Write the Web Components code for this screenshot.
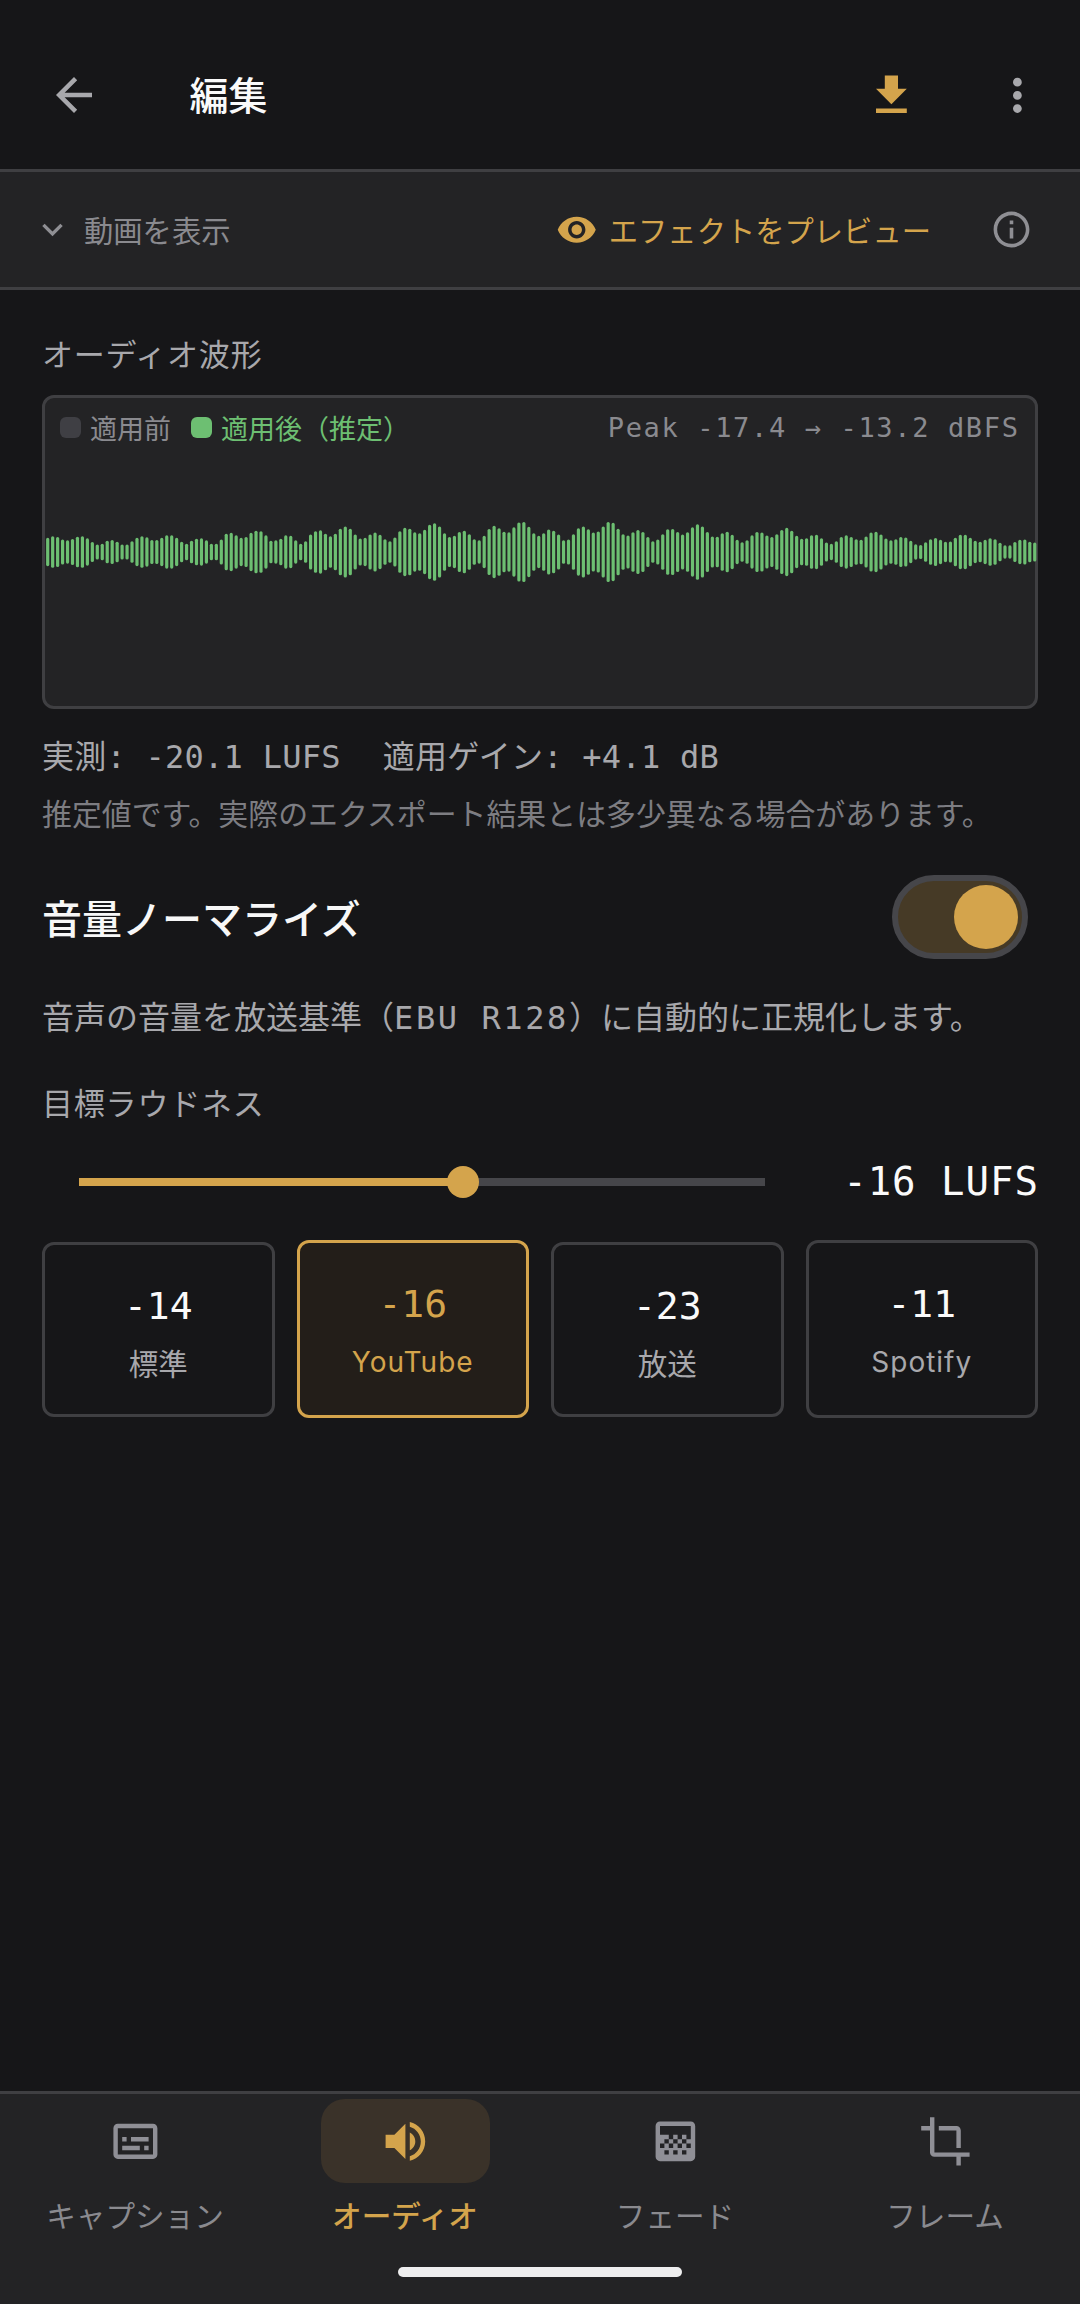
<!DOCTYPE html>
<html lang="ja">
<head>
<meta charset="utf-8">
<title>編集</title>
<style>
html,body{margin:0;padding:0;background:#161618;}
body{font-family:"Inter","Noto Sans CJK JP",sans-serif;color:#a8a8ac;}
</style>
</head>
<body>
<edit-screen>
  <app-bar slot="top">編集</app-bar>
  <preview-bar slot="top"></preview-bar>

  <section-label>オーディオ波形</section-label>
  <wave-panel></wave-panel>
  <stat-line><span>実測: -20.1 LUFS</span><span>適用ゲイン: +4.1 dB</span></stat-line>
  <note-line>推定値です。実際のエクスポート結果とは多少異なる場合があります。</note-line>
  <toggle-row>音量ノーマライズ</toggle-row>
  <desc-line>音声の音量を放送基準&#xFF08;<span>EBU R128</span>&#xFF09;に自動的に正規化します。</desc-line>
  <section-label class="target">目標ラウドネス</section-label>
  <loud-slider value="56">-16 LUFS</loud-slider>
  <preset-row>
    <preset-card num="-14">標準</preset-card>
    <preset-card num="-16" active tall>YouTube</preset-card>
    <preset-card num="-23">放送</preset-card>
    <preset-card num="-11" tall>Spotify</preset-card>
  </preset-row>

  <bottom-nav slot="bottom">
    <nav-item icon="subtitles">キャプション</nav-item>
    <nav-item icon="volume" active>オーディオ</nav-item>
    <nav-item icon="gradient">フェード</nav-item>
    <nav-item icon="crop">フレーム</nav-item>
  </bottom-nav>
</edit-screen>

<script>
const GOLD = '#d4a44c';
const ICONS = {
  back:'M20 11H7.83l5.59-5.59L12 4l-8 8 8 8 1.41-1.41L7.83 13H20v-2z',
  download:'M19 9h-4V3H9v6H5l7 7 7-7zM5 18v2h14v-2H5z',
  more:'M12 8c1.1 0 2-.9 2-2s-.9-2-2-2-2 .9-2 2 .9 2 2 2zm0 2c-1.1 0-2 .9-2 2s.9 2 2 2 2-.9 2-2-.9-2-2-2zm0 6c-1.1 0-2 .9-2 2s.9 2 2 2 2-.9 2-2-.9-2-2-2z',
  chevron:'M16.59 8.59L12 13.17 7.41 8.59 6 10l6 6 6-6z',
  eye:'M12 4.5C7 4.5 2.73 7.61 1 12c1.73 4.39 6 7.5 11 7.5s9.27-3.11 11-7.5c-1.73-4.39-6-7.5-11-7.5zM12 17c-2.76 0-5-2.24-5-5s2.24-5 5-5 5 2.24 5 5-2.24 5-5 5zm0-8c-1.66 0-3 1.34-3 3s1.34 3 3 3 3-1.34 3-3-1.34-3-3-3z',
  info:'M11 7h2v2h-2zm0 4h2v6h-2zm1-9C6.48 2 2 6.48 2 12s4.48 10 10 10 10-4.48 10-10S17.52 2 12 2zm0 18c-4.41 0-8-3.59-8-8s3.59-8 8-8 8 3.59 8 8-3.59 8-8 8z',
  subtitles:'M20 4H4c-1.1 0-2 .9-2 2v12c0 1.1.9 2 2 2h16c1.1 0 2-.9 2-2V6c0-1.1-.9-2-2-2zm0 14H4V6h16v12zM6 10h2v2H6zm0 4h8v2H6zm10 0h2v2h-2zm-6-4h8v2h-8z',
  volume:'M3 9v6h4l5 5V4L7 9H3zm13.5 3c0-1.77-1.02-3.29-2.5-4.03v8.05c1.48-.73 2.5-2.25 2.5-4.02zM14 3.23v2.06c2.89.86 5 3.54 5 6.71s-2.11 5.85-5 6.71v2.06c4.01-.91 7-4.49 7-8.77s-2.99-7.86-7-8.77z',
  gradient:'M11 9h2v2h-2zm-2 2h2v2H9zm4 0h2v2h-2zm2-2h2v2h-2zM7 9h2v2H7zm12-6H5c-1.1 0-2 .9-2 2v14c0 1.1.9 2 2 2h14c1.1 0 2-.9 2-2V5c0-1.1-.9-2-2-2zM9 18H7v-2h2v2zm4 0h-2v-2h2v2zm4 0h-2v-2h2v2zm2-7h-2v2h2v2h-2v-2h-2v2h-2v-2h-2v2H9v-2H7v2H5v-2h2V9H5V5h14v6z',
  crop:'M17 15h2V7c0-1.1-.9-2-2-2H9v2h8v8zM7 17V1H5v4H1v2h4v10c0 1.1.9 2 2 2h10v4h2v-4h4v-2H7z'
};
function shadow(el, html){ el.attachShadow({mode:'open'}).innerHTML = html; }
function def(name, html, extra){
  customElements.define(name, class extends HTMLElement{
    constructor(){ super(); shadow(this, typeof html==='function' ? html(this) : html); }
    connectedCallback(){ if(extra) extra(this); }
  });
}

customElements.define('ui-icon', class extends HTMLElement{
  connectedCallback(){
    if(this.shadowRoot) return;
    const s = this.getAttribute('size')||52.8, c = this.getAttribute('color')||'currentColor';
    shadow(this, `<style>:host{display:block;flex:none;width:${s}px;height:${s}px}svg{display:block;width:100%;height:100%}</style>
    <svg viewBox="0 0 24 24"><path fill="${c}" d="${ICONS[this.getAttribute('name')]}"/></svg>`);
  }
});

def('edit-screen', `<style>
:host{display:flex;flex-direction:column;height:2304px;width:1080px;background:#161618;overflow:hidden}
main{flex:1;display:flex;flex-direction:column;padding:0 42px;min-height:0}
</style><slot name="top"></slot><main><slot></slot></main><slot name="bottom"></slot>`);

def('app-bar', `<style>
:host{display:flex;align-items:center;height:169px;box-sizing:border-box;padding:21px 36.5px 0 47px;font:500 39px/54px "Noto Sans CJK JP",sans-serif;color:#fafafa}
.t{flex:1;margin-left:88.5px;position:relative;top:-2px}
.d{margin-right:73px}
</style>
<ui-icon name="back" size="54" color="#a8a8ac"></ui-icon>
<div class="t"><slot></slot></div>
<ui-icon class="d" name="download" color="${GOLD}"></ui-icon>
<ui-icon name="more" color="#a8a8ac"></ui-icon>`);

def('preview-bar', `<style>
:host{display:flex;align-items:center;height:121px;box-sizing:border-box;background:#232325;border-top:3px solid #3f3f42;border-bottom:3px solid #3f3f42;padding:0 47px 0 32px;font:400 29.3px/44px "Noto Sans CJK JP",sans-serif}
.s{color:#8a8a8f;margin-left:11px;position:relative;top:-1px}
.sp{flex:1}
.e{color:${GOLD};margin-left:11px;position:relative;top:-1px}
.i{margin-left:59px}
</style>
<ui-icon name="chevron" size="41" color="#8f8f94"></ui-icon>
<span class="s">動画を表示</span>
<span class="sp"></span>
<ui-icon name="eye" size="41.5" color="${GOLD}"></ui-icon>
<span class="e">エフェクトをプレビュー</span>
<ui-icon class="i" name="info" size="43" color="#8f8f94"></ui-icon>`);

def('section-label', `<style>
:host{display:block;font:400 31px/44px "Noto Sans CJK JP",sans-serif;letter-spacing:.8px;color:#a8a8ac;margin-top:41px}
:host(.target){margin-top:43px}
</style><slot></slot>`);

const H = [85,95,90,75,70,78,92,95,82,60,45,50,68,72,62,45,45,65,85,95,88,72,72,85,100,100,85,62,50,68,80,82,70,50,50,75,110,115,100,85,90,115,128,125,100,68,70,80,100,97,70,50,65,105,125,130,110,95,110,140,
153,140,105,81,85,105,117,103,77,65,87,125,145,140,118,113,133,163,173,153,113,90,97,120,128,107,77,70,97,138,157,143,122,118,148,177,180,151,113,97,113,
135,128,105,71,75,107,142,153,137,117,123,153,180,175,140,107,99,119,132,120,90,65,75,107,137,138,120,105,119,148,167,153,120,93,92,113,122,103,73,59,71,100,120,117,99,90,107,132,145,128,
97,80,83,101,103,83,57,49,65,90,100,90,77,74,93,117,121,105,81,71,77,90,87,67,46,42,59,77,84,73,61,63,86,103,103,86,67,62,73,83,77,56,40,40,60,73,75,62,57];
def('wave-panel', () => {
  const P = 992/H.length;
  const rects = H.map((h,i)=>`<rect x="${(1.1+i*P).toFixed(2)}" y="${(94-h/6).toFixed(2)}" width="3.2" height="${(h/3).toFixed(2)}" rx="1.6"/>`).join('');
  return `<style>
:host{display:block;height:314px;box-sizing:border-box;margin-top:20px;background:#232325;border:3px solid #3f3f42;border-radius:12px;padding-bottom:60px}
.l{display:flex;align-items:center;height:60px;box-sizing:border-box;padding:0 17px 0 15px;font:400 27px/40px "Noto Sans CJK JP",sans-serif;color:#8a8a8f}
.sw{width:21px;height:21px;border-radius:6px;background:#3f3f44;margin-right:9px;margin-top:-1px}
.g{background:#6dbf72;margin-left:20px}
.gt{color:#6dbf72}
.p{margin-left:auto;font:400 27px/40px "DejaVu Sans Mono",monospace;letter-spacing:1.65px;margin-right:-1.6px}
svg{display:block;width:992px;height:188px;fill:#6dbf72}
</style>
<div class="l"><span class="sw"></span><span>適用前</span><span class="sw g"></span><span class="gt">適用後&#xFF08;推定&#xFF09;</span><span class="p">Peak -17.4 → -13.2 dBFS</span></div>
<svg viewBox="0 0 992 188">${rects}</svg>`;
});

def('stat-line', `<style>
:host{display:flex;gap:42px;margin-top:26px;font:400 32px/44px "DejaVu Sans Mono","Noto Sans CJK JP",monospace;letter-spacing:.25px;color:#a8a8ac;white-space:pre}
</style><slot></slot>`);

def('note-line', `<style>
:host{display:block;margin-top:11px;font:400 29.9px/44px "Noto Sans CJK JP",sans-serif;color:#7d7d82;white-space:nowrap}
</style><slot></slot>`);

def('toggle-row', `<style>
:host{display:flex;align-items:center;justify-content:space-between;height:84px;margin-top:41px;font:500 40px/54px "Noto Sans CJK JP",sans-serif;color:#f7f7f7}
.sw{box-sizing:border-box;width:136px;height:84px;border:6px solid #46464a;border-radius:42px;background:#463a26;margin-right:10.5px;display:flex;align-items:center;justify-content:flex-end;padding-right:4px}
.th{width:64px;height:64px;border-radius:50%;background:${GOLD}}
</style><span><slot></slot></span><div class="sw"><div class="th"></div></div>`);

def('desc-line', `<style>
:host{display:block;height:44px;margin-top:34px;font:400 32px/44px "Noto Sans CJK JP",sans-serif;color:#a8a8ac;white-space:nowrap}
::slotted(span){font-family:"DejaVu Sans Mono",monospace;letter-spacing:2.6px}
</style><slot></slot>`);

def('loud-slider', el => `<style>
:host{display:flex;align-items:center;height:44px;margin-top:36px;padding-left:37px}
.tr{position:relative;flex:1;height:8px;background:#46464a;margin-right:78px}
.f{height:100%;background:${GOLD};width:${el.getAttribute('value')}%}
.th{position:absolute;top:50%;left:${el.getAttribute('value')}%;width:32px;height:32px;margin:-16px 0 0 -16px;border-radius:50%;background:${GOLD}}
.v{font:500 39px/44px "DejaVu Sans Mono",monospace;letter-spacing:1px;margin-right:-1px;color:#fafafa;white-space:nowrap}
</style><div class="tr"><div class="f"></div><div class="th"></div></div><div class="v"><slot></slot></div>`);

def('preset-row', `<style>
:host{display:flex;align-items:center;gap:22px;margin-top:36px;height:178px}
::slotted(*){flex:1}
</style><slot></slot>`);

def('preset-card', el => `<style>
:host{display:flex;flex-direction:column;align-items:center;box-sizing:border-box;height:175px;border:3px solid #3f3f42;border-radius:12px;padding-top:36px;color:#a8a8ac;min-width:0}
:host([tall]){height:178px}
:host([active]){border-color:${GOLD};background:#231e19;color:${GOLD}}
.n{font:500 38px/50px "DejaVu Sans Mono",monospace;color:#fafafa}
:host([active]) .n{color:${GOLD}}
.l{font:400 29.5px/40px "Noto Sans CJK JP",sans-serif;margin-top:11px}
:host([tall]) .l{font:400 28px/40px "Inter","Noto Sans CJK JP",sans-serif;letter-spacing:1px;margin-top:13px}
</style><div class="n">${el.getAttribute('num')}</div><div class="l"><slot></slot></div>`);

def('bottom-nav', `<style>
:host{display:flex;flex-direction:column;box-sizing:border-box;height:213px;background:#232325;border-top:3px solid #3f3f42}
.r{display:grid;grid-template-columns:repeat(4,1fr);padding-top:5px}
.h{width:284px;height:10px;border-radius:5px;background:#eeeeef;margin:31px auto 0}
</style><div class="r"><slot></slot></div><div class="h"></div>`);

def('nav-item', el => `<style>
:host{display:flex;flex-direction:column;align-items:center;font:400 29.6px/42px "Noto Sans CJK JP",sans-serif;color:#8a8a8f}
.p{display:flex;align-items:center;justify-content:center;width:169px;height:84px;border-radius:24px}
:host([active]) .p{background:#3a3229}
:host([active]){color:${GOLD};font-weight:500}
.t{margin-top:11px}
</style><div class="p"><ui-icon name="${el.getAttribute('icon')}" color="${el.hasAttribute('active')?GOLD:'#8f8f96'}"></ui-icon></div><div class="t"><slot></slot></div>`);
</script>
</body>
</html>
